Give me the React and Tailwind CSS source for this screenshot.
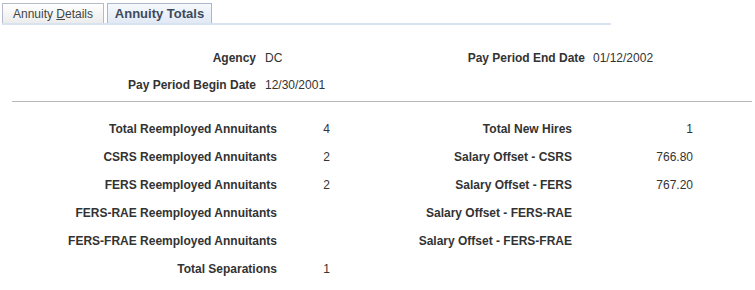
export default function App() {
  const font = { fontFamily: '"Liberation Sans", Arial, sans-serif' };
  const left = [
    ["Total Reemployed Annuitants", "4"],
    ["CSRS Reemployed Annuitants", "2"],
    ["FERS Reemployed Annuitants", "2"],
    ["FERS-RAE Reemployed Annuitants", ""],
    ["FERS-FRAE Reemployed Annuitants", ""],
    ["Total Separations", "1"],
  ];
  const right = [
    ["Total New Hires", "1"],
    ["Salary Offset - CSRS", "766.80"],
    ["Salary Offset - FERS", "767.20"],
    ["Salary Offset - FERS-RAE", ""],
    ["Salary Offset - FERS-FRAE", ""],
    ["", ""],
  ];
  return (
    <div className="w-[755px] h-[290px] bg-white text-[12px] text-[#333333] overflow-hidden" style={font}>
      <div className="pt-[3px] pl-[2px]">
        <div className="flex gap-[3px] h-[20px]">
          <div className="w-[102px] h-[20px] border border-b-0 border-[#b4bccb] bg-gradient-to-b from-white to-[#ececec] flex items-center justify-center text-[#444]">
            Annuity&nbsp;<span className="underline">D</span>etails
          </div>
          <div className="w-[105px] h-[20px] border border-b-0 border-[#a9b7cc] bg-gradient-to-b from-[#f6f9fd] to-[#e1e9f4] flex items-center justify-center font-bold text-[13px] text-[#3d4a5c]">
            Annuity Totals
          </div>
        </div>
        <div className="w-[609px] h-[2px] bg-[#d7e3f1]"></div>
      </div>

      <div className="mt-[26px] flex flex-col gap-[13px]">
        <div className="flex items-center h-[14px]">
          <div className="w-[256px] text-right font-bold">Agency</div>
          <div className="w-[144px] pl-[9px]">DC</div>
          <div className="w-[185px] text-right font-bold">Pay Period End Date</div>
          <div className="pl-[8px]">01/12/2002</div>
        </div>
        <div className="flex items-center h-[14px]">
          <div className="w-[256px] text-right font-bold">Pay Period Begin Date</div>
          <div className="pl-[9px]">12/30/2001</div>
        </div>
      </div>

      <div className="mt-[9px] ml-[12px] w-[740px] h-px bg-[#b8b8b8]"></div>

      <div className="mt-[20px] flex flex-col gap-[14px]">
        {left.map((l, i) => (
          <div key={i} className="flex items-center h-[14px]">
            <div className="w-[277px] text-right font-bold">{l[0]}</div>
            <div className="w-[53px] text-right">{l[1]}</div>
            <div className="w-[242px] text-right font-bold">{right[i][0]}</div>
            <div className="w-[121px] text-right">{right[i][1]}</div>
          </div>
        ))}
      </div>
    </div>
  );
}
